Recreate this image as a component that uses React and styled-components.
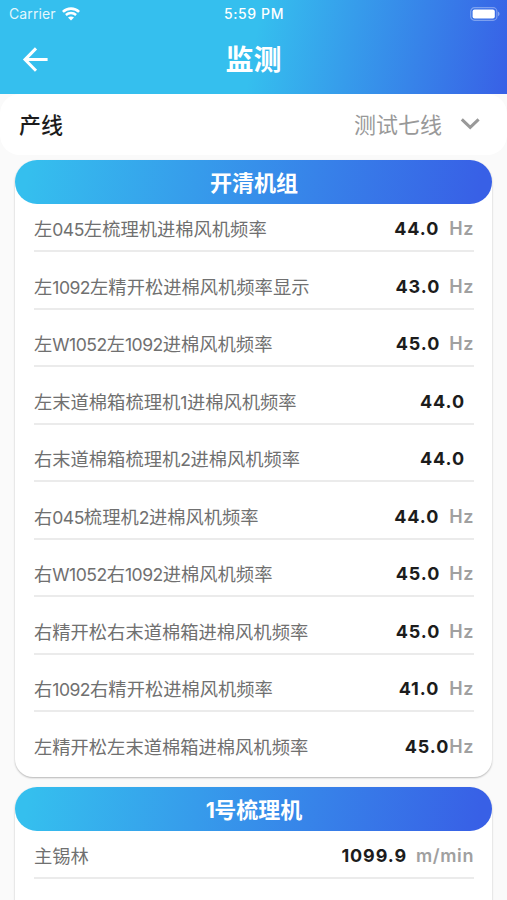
import React from "react";
import styled, { createGlobalStyle } from "styled-components";

const groups = [
  {
    title: "开清机组",
    items: [
      { name: "左045左梳理机进棉风机频率", value: "44.0", unit: "Hz", shift: 1 },
      { name: "左1092左精开松进棉风机频率显示", value: "43.0", unit: "Hz" },
      { name: "左W1052左1092进棉风机频率", value: "45.0", unit: "Hz" },
      { name: "左末道棉箱梳理机1进棉风机频率", value: "44.0", unit: "" },
      { name: "右末道棉箱梳理机2进棉风机频率", value: "44.0", unit: "" },
      { name: "右045梳理机2进棉风机频率", value: "44.0", unit: "Hz", shift: 1 },
      { name: "右W1052右1092进棉风机频率", value: "45.0", unit: "Hz" },
      { name: "右精开松右末道棉箱进棉风机频率", value: "45.0", unit: "Hz" },
      { name: "右1092右精开松进棉风机频率", value: "41.0", unit: "Hz", shift: 1 },
      { name: "左精开松左末道棉箱进棉风机频率", value: "45.0", unit: "Hz", tight: true },
    ],
  },
  {
    title: "1号梳理机",
    open: true,
    items: [{ name: "主锡林", value: "1099.9", unit: "m/min" }],
  },
];

const StatusBar = () => (
  <Status>
    <Carrier>
      Carrier
      <svg width="18" height="14" viewBox="0 0 18 14" fill="none" stroke="#fff">
        <path d="M0.9 4.9C5.4 0.5 12.6 0.5 17.1 4.9" strokeWidth="2.6" />
        <path d="M3.9 8C6.8 5.3 11.2 5.3 14.1 8" strokeWidth="2.4" />
        <path d="M9 13.6L6 10.6C7.7 9.1 10.3 9.1 12 10.6Z" fill="#fff" stroke="none" />
      </svg>
    </Carrier>
    <Time>5:59 PM</Time>
    <Battery>
      <svg width="30" height="14" viewBox="0 0 30 14">
        <rect
          x="0.7"
          y="0.7"
          width="26.2"
          height="12.6"
          rx="3.8"
          fill="none"
          stroke="#fff"
          strokeOpacity="0.35"
          strokeWidth="1.2"
        />
        <rect x="2.6" y="2.5" width="22.2" height="9" rx="2" fill="#fff" />
        <path d="M28 4.8C30 5.4 30 8.6 28 9.2Z" fill="#fff" fillOpacity="0.4" />
      </svg>
    </Battery>
  </Status>
);

// latin letters and digits use a narrower face than the chinese text
const MixedText = ({ text }) =>
  text
    .split(/([A-Z0-9]+)/)
    .map((part, i) => (i % 2 ? <Latin key={i}>{part}</Latin> : part));

const Group = ({ title, items, open }) => (
  <Card $open={open}>
    <CardTitle>
      <MixedText text={title} />
    </CardTitle>
    <List>
      {items.map((item, i) => (
        <Row key={item.name} $last={!open && i === items.length - 1}>
          <Name>
            <MixedText text={item.name} />
          </Name>
          <Value $shift={item.shift}>{item.value}</Value>
          <Unit $tight={item.tight}>{item.unit}</Unit>
        </Row>
      ))}
    </List>
  </Card>
);

const App = () => {
  return (
    <Page>
      <GlobalStyle />
      <Header>
        <StatusBar />
        <NavBar>
          <BackButton aria-label="返回">
            <svg width="26" height="26" viewBox="0 0 26 26" fill="none" stroke="#fff" strokeWidth="3">
              <path d="M25.6 12.6H3M14 1.4L3 12.6L14 23.8" />
            </svg>
          </BackButton>
          <Title>监测</Title>
        </NavBar>
      </Header>
      <LineSelect>
        <LineLabel>产线</LineLabel>
        <LineValue>测试七线</LineValue>
        <svg width="20" height="12" viewBox="0 0 20 12" fill="none" stroke="#999" strokeWidth="3">
          <path d="M1.8 1.4L10.2 9.4L18.6 1.4" />
        </svg>
      </LineSelect>
      <Content>
        {groups.map((group) => (
          <Group key={group.title} {...group} />
        ))}
      </Content>
    </Page>
  );
};

const GlobalStyle = createGlobalStyle`
  * {
    box-sizing: border-box;
  }

  body {
    margin: 0;
    overflow: hidden;
    font-family: "Noto Sans CJK SC", sans-serif;
  }
`;

const Page = styled.div`
  height: 900px;
  overflow: hidden;
  display: flex;
  flex-direction: column;
  background-color: #fafafa;
`;

const Header = styled.header`
  flex: none;
  height: 94px;
  background: linear-gradient(100deg, #35bfee 50%, #3860e6 100%);
  color: white;
`;

const Status = styled.div`
  height: 27px;
  padding: 0 7px 0 9px;
  display: grid;
  grid-template-columns: 1fr auto 1fr;
  align-items: center;
  font-family: Inter, sans-serif;
  font-size: 14px;
`;

const Carrier = styled.div`
  display: flex;
  align-items: center;
  gap: 6px;
  color: rgba(255, 255, 255, 0.88);
  letter-spacing: 0.1px;
`;

const Time = styled.div`
  margin-left: -1px;
  font-weight: 500;
  letter-spacing: 0.6px;
`;

const Battery = styled.div`
  display: flex;
  justify-content: flex-end;
`;

const NavBar = styled.div`
  height: 66px;
  padding: 0 22px;
  display: grid;
  grid-template-columns: 1fr auto 1fr;
  align-items: center;
`;

const BackButton = styled.button`
  width: 26px;
  height: 26px;
  padding: 0;
  border: none;
  background: none;
  cursor: pointer;
`;

const Title = styled.h1`
  margin: 0 0 4px;
  font-size: 28px;
  font-weight: 700;
  line-height: 40px;
`;

const LineSelect = styled.div`
  flex: none;
  height: 61px;
  padding: 0 27px 2px 19px;
  display: flex;
  align-items: center;
  background-color: white;
  border-radius: 20px;
`;

const LineLabel = styled.div`
  flex: 1;
  margin-bottom: 1px;
  font-size: 22px;
  font-weight: 500;
  color: #1c1c1c;
`;

const LineValue = styled.div`
  margin: 0 18px 1px 0;
  font-size: 22px;
  font-weight: 400;
  color: #999;
`;

const Content = styled.main`
  padding: 5px 15px 0;
  display: flex;
  flex-direction: column;
  gap: 10px;
`;

const Card = styled.section`
  flex: none;
  min-height: ${({ $open }) => ($open ? "160px" : "0")};
  background-color: white;
  border-radius: 22px 22px 18px 18px;
  box-shadow: 0 1px 2px rgba(0, 0, 0, 0.28);
`;

const Latin = styled.span`
  font-family: Inter, sans-serif;
  font-size: 0.96em;
  line-height: 1;
  letter-spacing: -0.5px;
`;

const CardTitle = styled.h2`
  height: 44px;
  margin: 0;
  padding-left: 1px;
  border-radius: 22px;
  background: linear-gradient(100deg, #35bfee 3%, #3860e6 97%);
  color: white;
  font-size: 22px;
  font-weight: 700;
  line-height: 42px;
  text-align: center;
`;

const List = styled.div`
  padding: 0 18px 7px 19px;
`;

const Row = styled.div`
  height: 57.5px;
  padding-bottom: 8px;
  display: flex;
  align-items: flex-end;
  border-bottom: 2px solid ${({ $last }) => ($last ? "transparent" : "#ebebeb")};
  line-height: 26px;

  &:first-child {
    height: 48px;
  }
`;

const Name = styled.div`
  flex: 1;
  height: 27px;
  font-size: 18.3px;
  font-weight: 400;
  color: #707070;
  white-space: nowrap;
`;

const Value = styled.div`
  margin-right: ${({ $shift }) => ($shift ? "1px" : "0")};
  font-family: Inter, sans-serif;
  font-size: 18px;
  font-weight: 700;
  letter-spacing: 0.9px;
  color: #1c1c1c;
`;

const Unit = styled.div`
  padding-left: ${({ $tight }) => ($tight ? "0" : "9px")};
  font-family: Inter, sans-serif;
  font-size: 18px;
  font-weight: 600;
  letter-spacing: 0.6px;
  color: #a0a0a0;
`;

export default App;
